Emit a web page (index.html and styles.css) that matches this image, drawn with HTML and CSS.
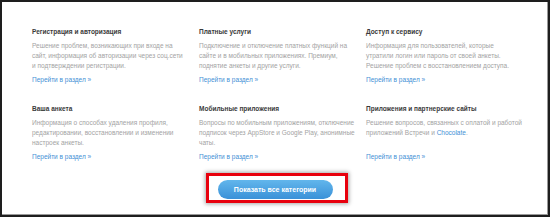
FILE: index.html
```html
<!DOCTYPE html>
<html lang="ru">
<head>
<meta charset="utf-8">
<link rel="stylesheet" href="styles.css">
</head>
<body>
<div class="frame">
  <div class="grid">
    <div class="item">
      <div class="title">Регистрация и авторизация</div>
      <div class="desc">Решение проблем, возникающих при входе на<br>сайт, информация об авторизации через соц.сети<br>и подтверждении регистрации.</div>
      <a class="link" href="#">Перейти в раздел »</a>
    </div>
    <div class="item">
      <div class="title">Платные услуги</div>
      <div class="desc">Подключение и отключение платных функций на<br>сайте и в мобильных приложениях. Премиум,<br>поднятие анкеты и другие услуги.</div>
      <a class="link" href="#">Перейти в раздел »</a>
    </div>
    <div class="item">
      <div class="title">Доступ к сервису</div>
      <div class="desc">Информация для пользователей, которые<br>утратили логин или пароль от своей анкеты.<br>Решение проблем с восстановлением доступа.</div>
      <a class="link" href="#">Перейти в раздел »</a>
    </div>
    <div class="item">
      <div class="title">Ваша анкета</div>
      <div class="desc">Информация о способах удаления профиля,<br>редактировании, восстановлении и изменении<br>настроек анкеты.</div>
      <a class="link" href="#">Перейти в раздел »</a>
    </div>
    <div class="item">
      <div class="title">Мобильные приложения</div>
      <div class="desc">Вопросы по мобильным приложениям, отключение<br>подписок через AppStore и Google Play, анонимные<br>чаты.</div>
      <a class="link" href="#">Перейти в раздел »</a>
    </div>
    <div class="item">
      <div class="title">Приложения и партнерские сайты</div>
      <div class="desc">Решение вопросов, связанных с оплатой и работой<br>приложений Встречи и <a class="inline" href="#">Chocolate</a>.</div>
      <a class="link" href="#">Перейти в раздел »</a>
    </div>
  </div>
  <div class="actions">
    <div class="btn-wrap">
      <button class="btn">Показать все категории</button>
      <span class="highlight"></span>
    </div>
  </div>
</div>
</body>
</html>
```
FILE: styles.css
```css
html, body {
  margin: 0;
  padding: 0;
  background: #fff;
}
.frame {
  box-sizing: border-box;
  width: 550px;
  height: 217px;
  border: 2px solid #1e1e1e;
  box-shadow: inset -1px -1px 0 #9a9a9a;
  padding: 25px 0 0 30px;
  font-family: "Liberation Sans", Arial, sans-serif;
  font-size: 6.5px;
  line-height: 10px;
}
.grid {
  display: grid;
  grid-template-columns: 167px 167px 167px;
  row-gap: 19px;
}
.item {
  display: flex;
  flex-direction: column;
}
.title {
  color: #3a3a3a;
  font-weight: bold;
}
.desc {
  color: #a3a3a3;
  margin-top: 4px;
  height: 30px;
  white-space: nowrap;
}
.link, .inline {
  color: #3f8fd5;
  text-decoration: none;
}
.link {
  margin-top: 4px;
  align-self: flex-start;
}
.actions {
  display: flex;
  justify-content: center;
  margin-top: 18px;
  padding-right: 30px;
}
.btn-wrap {
  position: relative;
}
.btn {
  display: block;
  width: 115px;
  height: 19px;
  border: 0;
  border-radius: 10px;
  background: linear-gradient(#62b6ec, #3a91d8);
  color: #fff;
  font-family: "Liberation Sans", Arial, sans-serif;
  font-size: 7px;
  font-weight: bold;
  padding: 0;
}
.highlight {
  position: absolute;
  left: -12px;
  top: -7px;
  width: 142px;
  height: 30px;
  box-sizing: border-box;
  border: 3px solid #e8000d;
  box-shadow: 0 0 4px 1px rgba(0,0,0,0.35);
}
```
